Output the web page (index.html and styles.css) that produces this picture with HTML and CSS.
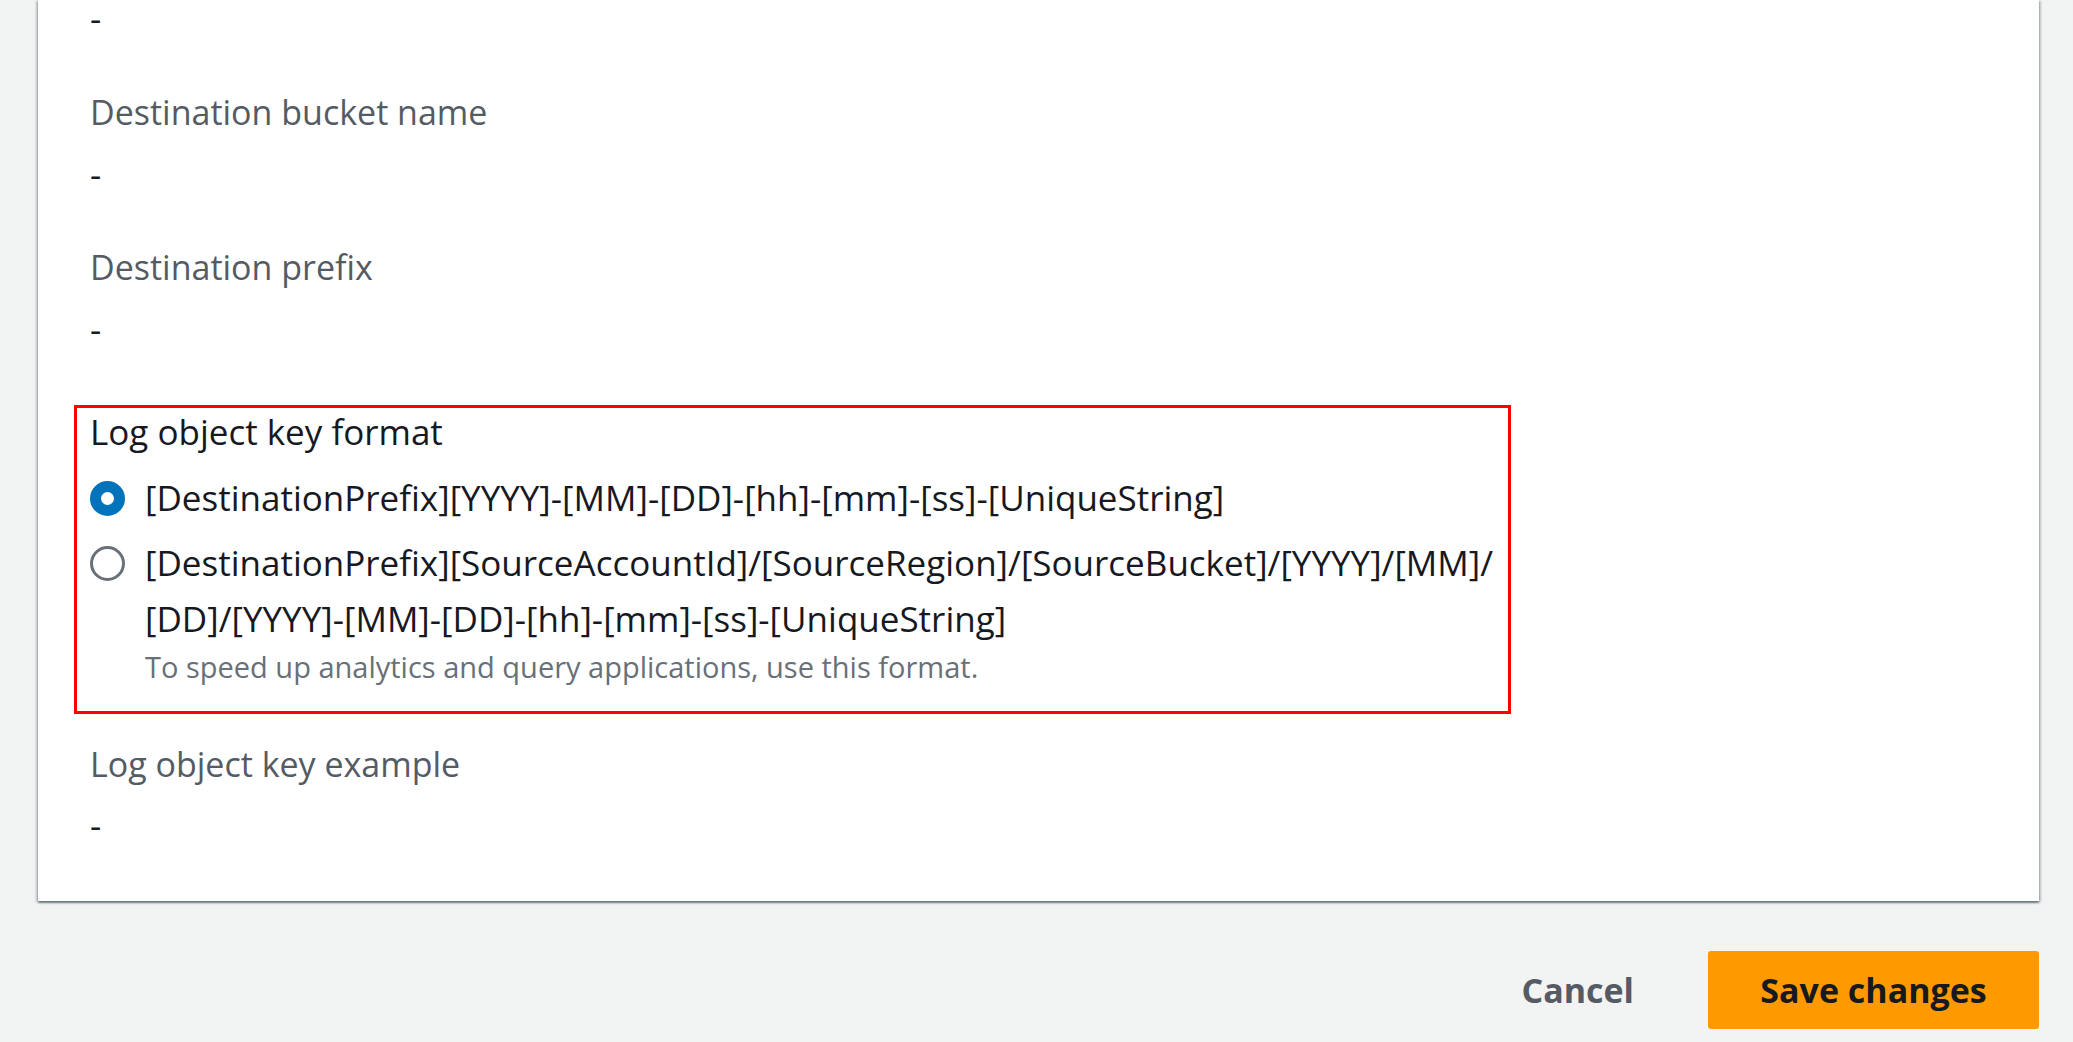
FILE: index.html
```html
<!DOCTYPE html>
<html lang="en">
<head>
<meta charset="utf-8">
<title>Edit server access logging</title>
<link rel="stylesheet" href="styles.css">
</head>
<body>
<div class="page">
  <section class="card">
    <div class="value first">-</div>

    <div class="field">
      <div class="label">Destination bucket name</div>
      <div class="value">-</div>
    </div>

    <div class="field">
      <div class="label">Destination prefix</div>
      <div class="value">-</div>
    </div>

    <div class="highlight">
      <div class="group-label">Log object key format</div>
      <div class="radio-row">
        <span class="radio checked"></span>
        <div class="radio-text">
          <div class="option">[DestinationPrefix][YYYY]-[MM]-[DD]-[hh]-[mm]-[ss]-[UniqueString]</div>
        </div>
      </div>
      <div class="radio-row">
        <span class="radio"></span>
        <div class="radio-text">
          <div class="option">[DestinationPrefix][SourceAccountId]/[SourceRegion]/[SourceBucket]/[YYYY]/[MM]/</div>
          <div class="option">[DD]/[YYYY]-[MM]-[DD]-[hh]-[mm]-[ss]-[UniqueString]</div>
          <div class="desc">To speed up analytics and query applications, use this format.</div>
        </div>
      </div>
    </div>

    <div class="field after">
      <div class="label">Log object key example</div>
      <div class="value">-</div>
    </div>
  </section>

  <div class="actions">
    <button class="btn btn-link">Cancel</button>
    <button class="btn btn-primary">Save changes</button>
  </div>
</div>
</body>
</html>
```

FILE: styles.css
```css
html, body {
  margin: 0;
  padding: 0;
  background: #f2f3f3;
  font-family: "Open Sans", "Noto Sans", Arial, sans-serif;
  color: #16191f;
  overflow: hidden;
}

.page {
  padding: 0 34px 0 38px;
}

.card {
  background: #ffffff;
  padding: 0 51px 49px 52px;
  box-shadow: 0 2px 2px 0 rgba(0, 28, 36, 0.45),
              2px 1px 2px 0 rgba(0, 28, 36, 0.2),
              -2px 1px 2px 0 rgba(0, 28, 36, 0.2);
}

.label {
  font-size: 34px;
  line-height: 55px;
  color: #545b64;
}

.value {
  font-size: 35px;
  line-height: 55px;
  color: #16191f;
  margin-top: 6px;
}

.value.first {
  margin-top: 0;
  padding-bottom: 10px;
  line-height: 36px;
}

.field {
  margin-top: 39px;
}

.highlight {
  width: 1437px;
  box-sizing: border-box;
  margin: 49px 0 0 -16px;
  border: 3px solid #ff0000;
  padding: 4px 0 24px 13px;
}

.group-label {
  font-size: 35px;
  line-height: 40px;
  color: #16191f;
  margin-bottom: 18px;
}

.radio-row {
  display: flex;
  align-items: flex-start;
  gap: 20px;
  margin-bottom: 9px;
}

.radio-row:last-child {
  margin-bottom: 0;
}

.radio {
  flex: none;
  width: 35px;
  height: 35px;
  margin-top: 11px;
  border-radius: 50%;
  box-sizing: border-box;
  border: 3px solid #687078;
  background: #ffffff;
}

.radio.checked {
  border: 11px solid #0073bb;
  background: #ffffff;
}

.option {
  font-size: 35px;
  line-height: 56px;
  color: #16191f;
  white-space: nowrap;
}

.desc {
  font-size: 29px;
  line-height: 40px;
  color: #687078;
}

.field.after {
  margin-top: 23px;
}

.field.after .value {
  margin-top: 5px;
}

.actions {
  display: flex;
  justify-content: flex-end;
  align-items: center;
  gap: 24px;
  margin-top: 50px;
}

.btn {
  font-family: "Open Sans", "Noto Sans", Arial, sans-serif;
  font-weight: 700;
  font-size: 34px;
  line-height: 50px;
  border: none;
  border-radius: 3px;
  cursor: pointer;
}

.btn-link {
  background: transparent;
  color: #545b64;
  padding: 14px 50px;
}

.btn-primary {
  background: #ff9900;
  color: #16191f;
  width: 331px;
  height: 78px;
  padding: 0;
}
```
